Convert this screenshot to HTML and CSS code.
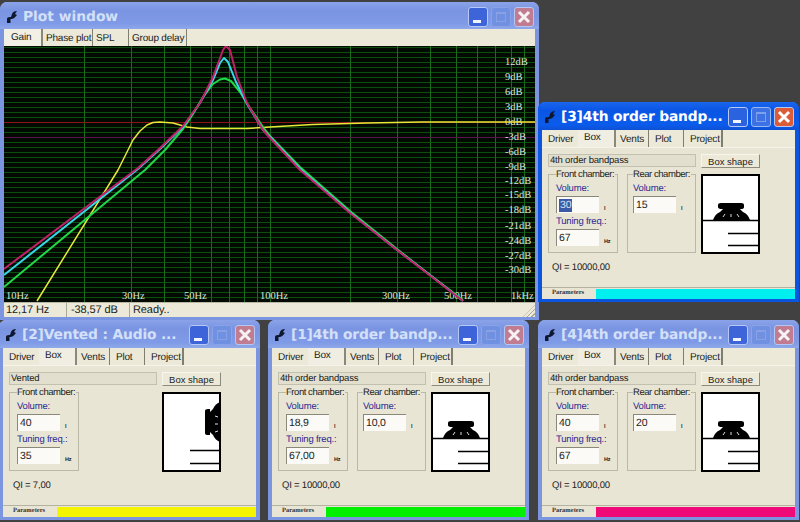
FILE: index.html
```html
<!DOCTYPE html>
<html lang="en">
<head>
<meta charset="utf-8">
<title>Plot window</title>
<link rel="stylesheet" href="styles.css">
</head>
<body>
<svg class="defs" width="0" height="0" aria-hidden="true">
  <symbol id="app" viewBox="0 0 10 12"><path d="M0 12V8Q0 6 3 6H4L5 3Q6 0 10 0L8 3L10 4Q8 7 5 8H3.500V12Z" fill="#101830"/></symbol>
  <symbol id="x" viewBox="0 0 18 18"><path d="M4 4L14 14M14 4L4 14" stroke="currentColor" stroke-width="3" fill="none"/></symbol>
  <symbol id="band" viewBox="0 0 59 80">
    <rect x="1" y="1" width="57" height="78" fill="#fff" stroke="#000" stroke-width="2"/>
    <path d="M0 46.500H59" stroke="#000" stroke-width="1.500"/>
    <path d="M17 31q0-2 3-2h20q3 0 3 2v2q0 2-3 2h-1l3 3q5 2 7 8H12q2-6 7-8l3-3h-1q-4 0-4-2Z" fill="#000"/>
    <path d="M22 43l2-3M30 43v-3M38 43l-2-3" stroke="#ddd" stroke-width="1"/>
    <path d="M27 59.500H58M27 71.500H58" stroke="#000" stroke-width="1.500"/>
  </symbol>
  <symbol id="vent" viewBox="0 0 59 80">
    <rect x="1" y="1" width="57" height="78" fill="#fff" stroke="#000" stroke-width="2"/>
    <path d="M43 19q0-2 3-2h2v3l3-3q2-5 7-7v40q-5-2-7-7l-3-3v3h-2q-3 0-3-2Z" fill="#000"/>
    <path d="M53 24l3 1M53 32h3M53 40l3-1" stroke="#ddd" stroke-width="1"/>
    <path d="M28 58.500H58M28 71.500H58" stroke="#000" stroke-width="1.500"/>
  </symbol>
</svg>

<main class="desktop">
  <section class="win win-plot">
    <header class="title title-plot">
      <svg class="app"><use href="#app"/></svg><h2>Plot window</h2>
      <div class="btns"><span class="b min"><i></i></span><span class="b max"><i></i></span><span class="b close"><svg class="xi"><use href="#x"/></svg></span></div>
    </header>
    <nav class="ptabs">
      <span class="ptab on t-gain">Gain</span><span class="ptab t-phase">Phase plot</span><span class="ptab t-spl">SPL</span><span class="ptab t-gd">Group delay</span>
    </nav>
    <svg class="plot" width="531" height="256" viewBox="4 46 531 256">
      <rect x="4" y="46" width="532" height="256" fill="#020a02"/>
      <path class="hg" d="M4 47.500H536M4 52.500H536M4 57.500H536M4 62.500H536M4 67.500H536M4 72.500H536M4 77.500H536M4 82.500H536M4 87.500H536M4 92.500H536M4 97.500H536M4 102.500H536M4 107.500H536M4 112.500H536M4 117.500H536M4 127.500H536M4 132.500H536M4 142.500H536M4 147.500H536M4 152.500H536M4 157.500H536M4 162.500H536M4 167.500H536M4 172.500H536M4 177.500H536M4 182.500H536M4 187.500H536M4 192.500H536M4 197.500H536M4 202.500H536M4 207.500H536M4 212.500H536M4 217.500H536M4 222.500H536M4 227.500H536M4 232.500H536M4 237.500H536M4 242.500H536M4 247.500H536M4 252.500H536M4 257.500H536M4 262.500H536M4 267.500H536M4 272.500H536M4 277.500H536M4 282.500H536M4 287.500H536M4 292.500H536M4 297.500H536"/>
      <path class="vg" d="M84.500 46V302M131.500 46V302M164.500 46V302M190.500 46V302M211.500 46V302M229.500 46V302M244.500 46V302M257.500 46V302M270.500 46V302M350.500 46V302M397.500 46V302M430.500 46V302M456.500 46V302M477.500 46V302M495.500 46V302M511.500 46V302M524.500 46V302"/>
      <path d="M4 122.500H536" stroke="#8a1418" stroke-width="1"/>
      <path d="M4 137.500H536" stroke="#5c1250" stroke-width="1"/>
      <g class="lbl">
        <text x="505" y="65">12dB</text><text x="505" y="80">9dB</text><text x="505" y="95">6dB</text><text x="505" y="110">3dB</text><text x="505" y="125">0dB</text><text x="505" y="140">-3dB</text><text x="505" y="155">-6dB</text><text x="505" y="170">-9dB</text><text x="505" y="184">-12dB</text><text x="505" y="198">-15dB</text><text x="505" y="213">-18dB</text><text x="505" y="229">-21dB</text><text x="505" y="244">-24dB</text><text x="505" y="259">-27dB</text><text x="505" y="273">-30dB</text>
        <text x="6" y="299">10Hz</text><text x="122" y="299">30Hz</text><text x="184" y="299">50Hz</text><text x="260" y="299">100Hz</text><text x="382" y="299">300Hz</text><text x="444" y="299">500Hz</text><text x="511" y="299">1kHz</text>
      </g>
      <polyline class="c cy" stroke="#e8e838" points="37,301 118,170 120,166 133,140 140,131 147,125 153,122.500 160,122 173,123 187,127 200,128.500 247,128.500 270,127 313,124.500 367,123 422,122 536,122"/>
      <polyline class="c" stroke="#20d848" points="4,287 145,170 165,150 183,129 193,114 203,97 213,84 220,79.500 225,78.500 231,81 240,92 250,108 263,127 270,136 300,167 350,211 397,249 430,275 463,300"/>
      <polyline class="c" stroke="#36d8e8" points="4,275 138,169 160,149 183,127 200,103 213,80 220,63 224,58 228,62 236,82 247,104 263,130 270,137 300,169 350,212.500 397,250 430,275 463,301"/>
      <polyline class="c" stroke="#c02068" points="4,269 138,168 160,148 183,126 200,103 213,77 223,50 226,46 230,50 237,77 247,103 263,130 270,138 300,170 350,213 397,250 430,275.500 463,301"/>
    </svg>
    <footer class="pstatus">
      <span class="cell c1">12,17 Hz</span><span class="cell c2">-38,57 dB</span><span class="cell c3">Ready..</span><span class="grip"></span>
    </footer>
  </section>

  <section class="win win-3 active">
    <header class="title">
      <svg class="app"><use href="#app"/></svg><h2>[3]4th order bandp...</h2>
      <div class="btns"><span class="b min"><i></i></span><span class="b max"><i></i></span><span class="b close"><svg class="xi"><use href="#x"/></svg></span></div>
    </header>
    <nav class="tabs"><span class="tab t1">Driver</span><span class="tab t2 on">Box</span><span class="tab t3">Vents</span><span class="tab t4">Plot</span><span class="tab t5">Project</span></nav>
    <div class="body">
      <div class="row"><div class="field">4th order bandpass</div><button class="shape">Box shape</button></div>
      <div class="row row2">
        <div class="group front"><div class="gt">Front chamber:</div>
          <div class="lab">Volume:</div><div class="inrow"><span class="inp sel"><b>30</b></span><span class="unit">l</span></div>
          <div class="lab lab2">Tuning freq.:</div><div class="inrow"><span class="inp">67</span><span class="unit">Hz</span></div></div>
        <div class="group rear"><div class="gt">Rear chamber:</div>
          <div class="lab">Volume:</div><div class="inrow"><span class="inp">15</span><span class="unit">l</span></div></div>
        <svg class="pic"><use href="#band"/></svg>
      </div>
      <div class="ql">QI = 10000,00</div>
    </div>
    <footer class="st"><span class="par">Parameters</span><span class="bar cyan"></span></footer>
  </section>

  <section class="win win-2">
    <header class="title">
      <svg class="app"><use href="#app"/></svg><h2>[2]Vented : Audio ...</h2>
      <div class="btns"><span class="b min"><i></i></span><span class="b max"><i></i></span><span class="b close"><svg class="xi"><use href="#x"/></svg></span></div>
    </header>
    <nav class="tabs"><span class="tab t1">Driver</span><span class="tab t2 on">Box</span><span class="tab t3">Vents</span><span class="tab t4">Plot</span><span class="tab t5">Project</span></nav>
    <div class="body">
      <div class="row"><div class="field">Vented</div><button class="shape">Box shape</button></div>
      <div class="row row2">
        <div class="group front"><div class="gt">Front chamber:</div>
          <div class="lab">Volume:</div><div class="inrow"><span class="inp">40</span><span class="unit">l</span></div>
          <div class="lab lab2">Tuning freq.:</div><div class="inrow"><span class="inp">35</span><span class="unit">Hz</span></div></div>
        <div class="rear-empty"></div>
        <svg class="pic"><use href="#vent"/></svg>
      </div>
      <div class="ql">QI = 7,00</div>
    </div>
    <footer class="st"><span class="par">Parameters</span><span class="bar yellow"></span></footer>
  </section>

  <section class="win win-1">
    <header class="title">
      <svg class="app"><use href="#app"/></svg><h2>[1]4th order bandp...</h2>
      <div class="btns"><span class="b min"><i></i></span><span class="b max"><i></i></span><span class="b close"><svg class="xi"><use href="#x"/></svg></span></div>
    </header>
    <nav class="tabs"><span class="tab t1">Driver</span><span class="tab t2 on">Box</span><span class="tab t3">Vents</span><span class="tab t4">Plot</span><span class="tab t5">Project</span></nav>
    <div class="body">
      <div class="row"><div class="field">4th order bandpass</div><button class="shape">Box shape</button></div>
      <div class="row row2">
        <div class="group front"><div class="gt">Front chamber:</div>
          <div class="lab">Volume:</div><div class="inrow"><span class="inp">18,9</span><span class="unit">l</span></div>
          <div class="lab lab2">Tuning freq.:</div><div class="inrow"><span class="inp">67,00</span><span class="unit">Hz</span></div></div>
        <div class="group rear"><div class="gt">Rear chamber:</div>
          <div class="lab">Volume:</div><div class="inrow"><span class="inp">10,0</span><span class="unit">l</span></div></div>
        <svg class="pic"><use href="#band"/></svg>
      </div>
      <div class="ql">QI = 10000,00</div>
    </div>
    <footer class="st"><span class="par">Parameters</span><span class="bar green"></span></footer>
  </section>

  <section class="win win-4">
    <header class="title">
      <svg class="app"><use href="#app"/></svg><h2>[4]4th order bandp...</h2>
      <div class="btns"><span class="b min"><i></i></span><span class="b max"><i></i></span><span class="b close"><svg class="xi"><use href="#x"/></svg></span></div>
    </header>
    <nav class="tabs"><span class="tab t1">Driver</span><span class="tab t2 on">Box</span><span class="tab t3">Vents</span><span class="tab t4">Plot</span><span class="tab t5">Project</span></nav>
    <div class="body">
      <div class="row"><div class="field">4th order bandpass</div><button class="shape">Box shape</button></div>
      <div class="row row2">
        <div class="group front"><div class="gt">Front chamber:</div>
          <div class="lab">Volume:</div><div class="inrow"><span class="inp">40</span><span class="unit">l</span></div>
          <div class="lab lab2">Tuning freq.:</div><div class="inrow"><span class="inp">67</span><span class="unit">Hz</span></div></div>
        <div class="group rear"><div class="gt">Rear chamber:</div>
          <div class="lab">Volume:</div><div class="inrow"><span class="inp">20</span><span class="unit">l</span></div></div>
        <svg class="pic"><use href="#band"/></svg>
      </div>
      <div class="ql">QI = 10000,00</div>
    </div>
    <footer class="st"><span class="par">Parameters</span><span class="bar pink"></span></footer>
  </section>
</main>
</body>
</html>
```
FILE: styles.css
```css
* { box-sizing: border-box; }
html, body { margin: 0; padding: 0; }
body { font-family: "Liberation Sans", Arial, sans-serif; color: #222; text-rendering: geometricPrecision; }
.defs { position: absolute; }
.desktop { position: relative; width: 800px; height: 522px; overflow: hidden; background: #414141; }

.win { position: absolute; display: flex; flex-direction: column; width: 261px; height: 200px; background: #e8e5d5; border: solid #7c95e0; border-width: 0 4px 3px; border-radius: 7px 7px 0 0; }
.win-plot { left: 0; top: 2px; width: 539px; height: 318px; }
.win-3 { left: 538px; top: 102px; z-index: 2; }
.win-2 { left: -1px; top: 320px; }
.win-1 { left: 268px; top: 320px; }
.win-4 { left: 538px; top: 320px; }
.win.active { border-color: #0b55e0; }

.title { flex: none; display: flex; align-items: center; height: 28px; margin: 0 -4px; padding: 2px 5px 0 7px; border-radius: 7px 7px 0 0; background: linear-gradient(#8aa3e8, #7a94e2 30%, #7f9ae6 80%, #8fa8ea); color: #d3e0f8; }
.title-plot { height: 27px; }
.active .title { background: linear-gradient(#1a66ee, #0a55e4 30%, #0b5cec 80%, #0d50d4); color: #fff; }
.app { flex: none; width: 10px; height: 12px; }
.title h2 { flex: 1; min-width: 0; margin: 0 0 0 6px; font: bold 13.800px "DejaVu Sans", sans-serif; letter-spacing: -.15px; white-space: nowrap; }
.title-plot h2 { letter-spacing: 0; }
.btns { flex: none; display: flex; gap: 3px; }
.b { position: relative; display: block; width: 20px; height: 20px; border: 1px solid #b8c8f4; border-radius: 3px; }
.min { background: #3d64d8; }
.min i { position: absolute; left: 4px; bottom: 3px; width: 8px; height: 3px; background: #f0f4ff; }
.max { background: #7090e2; border-color: #8aa3e8; }
.max i { position: absolute; left: 4px; top: 4px; width: 10px; height: 10px; border: 1px solid #8aa0e4; border-top-width: 2px; }
.close { background: #c07c90; color: #f6f2f4; }
.xi { display: block; width: 18px; height: 18px; }
.active .min { background: #2a62e0; }
.active .max { background: #3c72e4; border-color: #9ab8f4; }
.active .max i { border-color: #7ea0ec; }
.active .close { background: #dc5c38; color: #fff; }

.ptabs { flex: none; display: flex; height: 17px; background: #ece9d8; font-size: 10px; letter-spacing: -.2px; white-space: nowrap; }
.ptab { display: flex; align-items: center; padding-top: 2px; padding-left: 3px; border-right: 1px solid #808070; }
.ptab.on { padding-top: 0; padding-left: 7px; background: #f2f0e4; border-right: 2px solid #8a8878; }
.t-gain { width: 39px; }
.t-phase { width: 50px; }
.t-spl { width: 36px; }
.t-gd { width: 58px; }

.plot { flex: none; display: block; }
.hg { stroke: #0b4e0e; stroke-width: 1; fill: none; }
.vg { stroke: #1c6a20; stroke-width: 1; fill: none; }
.c { fill: none; stroke-width: 2; stroke-linejoin: round; }
.cy { stroke-width: 1.500; }
.lbl text { font: 10.500px "Liberation Serif", serif; fill: #dde4dc; }

.pstatus { flex: 1; display: flex; align-items: center; background: #ece9d8; border-top: 1px solid #b8b6a4; font-size: 11px; letter-spacing: -.1px; }
.cell { height: 100%; padding: 1px 2px 0; border-right: 1px solid #aaa898; }
.c1 { width: 63px; }
.c2 { width: 63px; padding-left: 4px; }
.c3 { flex: 1; border: 0; padding-left: 3px; }
.grip { flex: none; align-self: flex-end; width: 12px; height: 12px; background: repeating-linear-gradient(135deg, transparent 0 2px, #a8a696 2px 3px); clip-path: polygon(100% 0, 100% 100%, 0 100%); }

.tabs { flex: none; display: flex; height: 18px; background: #ece9d8; border-bottom: 1px solid #f6f4ea; font-size: 10px; letter-spacing: -.2px; white-space: nowrap; }
.tab { display: flex; align-items: center; padding: 2px 0 0 4px; border-right: 1px solid #807e70; }
.t1 { width: 36px; padding-left: 6px; border: 0; }
.t2 { width: 38px; padding: 0 0 2px 6px; background: #f0eee2; border-right: 2px solid #8a8878; }
.t3 { width: 33px; }
.t4 { width: 35px; padding-left: 6px; }
.t5 { width: 39px; padding-left: 6px; border-right-width: 2px; }

.body { flex: 1; padding: 6px 0 0 6px; background: #e8e5d5; font-size: 9.500px; letter-spacing: -.2px; }
.row { display: flex; gap: 5px; }
.row2 { margin-top: 6px; }
.field { width: 148px; height: 13px; padding-left: 1px; border: 1px solid #c2c0ae; background: #e2dfcf; line-height: 12px; }
.shape { width: 59px; height: 14px; padding: 0; background: #ece9d8; border: 1px solid; border-color: #f8f6ec #8c8a7c #8c8a7c #f8f6ec; font: 9.500px "Liberation Sans", sans-serif; letter-spacing: 0; color: #222; }
.group { width: 70px; height: 79px; padding: 0 0 0 7px; border: 1px solid #bab8a6; }
.rear { width: 69px; margin-left: 4px; padding-left: 5px; }
.rear-empty { width: 69px; margin-left: 4px; }
.gt { width: max-content; margin: -6px 0 0 0; padding: 0 1px 0 0; height: 11px; line-height: 11px; letter-spacing: -.45px; background: #e8e5d5; }
.lab { margin-top: 3px; height: 11px; line-height: 11px; color: #2c2a90; white-space: nowrap; }
.inrow { display: flex; align-items: flex-end; margin-top: 2px; }
.inp { display: block; width: 43px; height: 17px; padding: 1px 0 0 2px; background: #fbfaf6; border: solid #8a8878; border-width: 1px 0 0 1px; font-size: 10.500px; line-height: 14px; }
.inp.sel b { display: inline-block; font-weight: normal; background: #3a5aa8; color: #d8e0f0; padding: 0 1px; line-height: 13px; }
.unit { margin: 0 0 1px 5px; font: bold 5.500px "Liberation Sans", sans-serif; }
.pic { flex: none; width: 59px; height: 80px; }
.ql { margin: 8px 0 0 4px; font-size: 9.500px; }

.st { flex: none; display: flex; align-items: stretch; height: 12px; background: #e8e5d5; border-top: 1px solid #b4b2a0; }
.par { width: 54px; padding-left: 10px; font: bold 6.500px/10px "Liberation Serif", serif; color: #333; white-space: nowrap; }
.bar { flex: 1; margin-top: 1px; }
.cyan { background: #00f0f0; }
.yellow { background: #f4f400; }
.green { background: #00f000; }
.pink { background: #f00a78; }
```
